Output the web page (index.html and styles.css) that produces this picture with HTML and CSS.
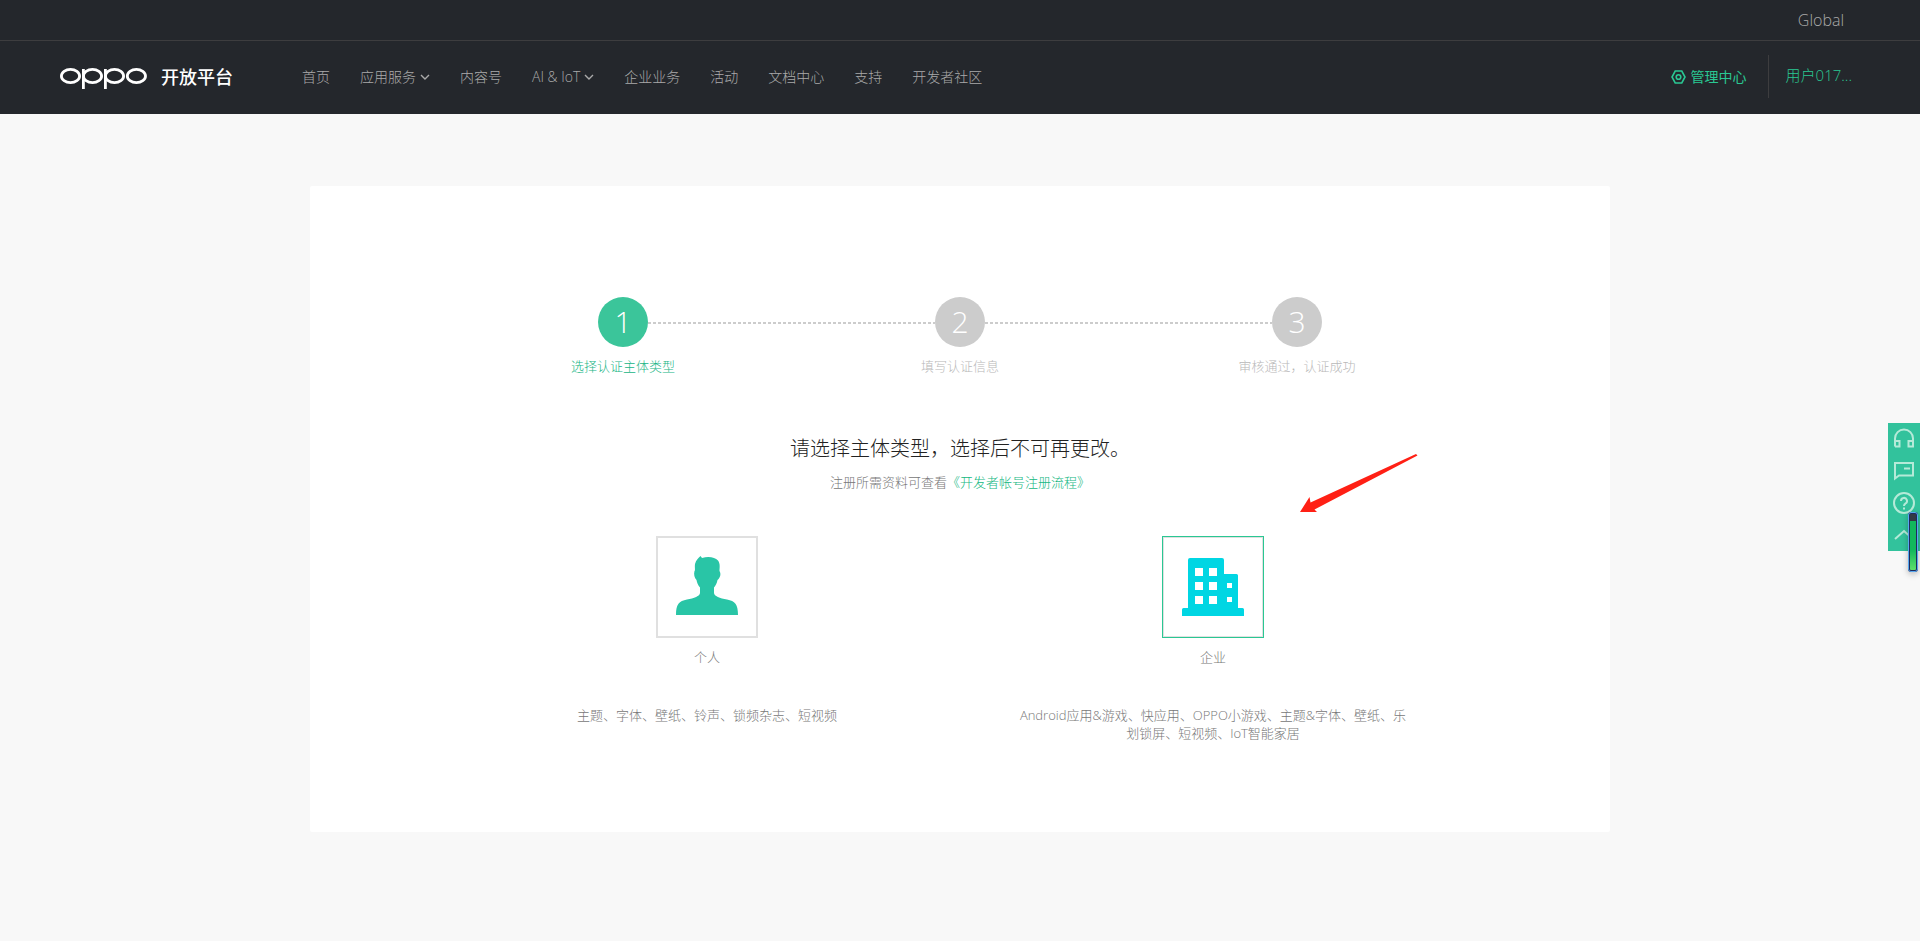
FILE: index.html
```html
<!DOCTYPE html>
<html lang="zh-CN">
<head>
<meta charset="utf-8">
<meta name="viewport" content="width=device-width, initial-scale=1">
<title>OPPO 开放平台</title>
<link rel="stylesheet" href="styles.css">
</head>
<body>
<header class="header">
  <div class="topbar"><a class="global" href="#">Global</a></div>
  <div class="navbar">
    <a class="brand" href="#">
      <svg class="brand-logo" viewBox="0 0 87 21" role="img" aria-label="OPPO">
        <g fill="none" stroke="#fff" stroke-width="2.8">
          <ellipse cx="10.5" cy="8" rx="9.1" ry="6.600"/>
          <ellipse cx="32.5" cy="8" rx="9.1" ry="6.600"/>
          <ellipse cx="54.5" cy="8" rx="9.1" ry="6.600"/>
          <ellipse cx="76.4" cy="8" rx="9.1" ry="6.600"/>
          <path d="M23.400 1v20M45.400 1v20"/>
        </g>
      </svg>
      <span class="brand-name">开放平台</span>
    </a>
    <nav class="menu">
      <a href="#">首页</a>
      <a href="#">应用服务<svg class="chevron" viewBox="0 0 10 6"><path d="M1 1l4 4 4-4"/></svg></a>
      <a href="#">内容号</a>
      <a href="#">AI &amp; IoT<svg class="chevron" viewBox="0 0 10 6"><path d="M1 1l4 4 4-4"/></svg></a>
      <a href="#">企业业务</a>
      <a href="#">活动</a>
      <a href="#">文档中心</a>
      <a href="#">支持</a>
      <a href="#">开发者社区</a>
    </nav>
    <div class="account">
      <a class="console" href="#">
        <svg class="console-icon" viewBox="0 0 15 14"><path d="M4.200 1h6.600L14 7l-3.200 6H4.200L1 7z"/><circle cx="7.500" cy="7" r="2.300"/></svg>
        管理中心
      </a>
      <a class="user" href="#">用户017...</a>
    </div>
  </div>
</header>

<main class="card">
  <ol class="steps">
    <li class="step active"><span class="num">1</span><span class="step-label">选择认证主体类型</span></li>
    <li class="step"><span class="num">2</span><span class="step-label">填写认证信息</span></li>
    <li class="step"><span class="num">3</span><span class="step-label">审核通过，认证成功</span></li>
  </ol>
  <h1 class="title">请选择主体类型，选择后不可再更改。</h1>
  <p class="hint">注册所需资料可查看<a href="#">《开发者帐号注册流程》</a></p>
  <div class="options">
    <section class="option">
      <button class="tile" type="button" aria-labelledby="personal">
        <svg viewBox="0 0 62 60"><path fill="#29c5a6" d="M0 59C0 48 3 45 11 43.500C18 42.500 24 40 24 37V31.500C21.500 29 21 26 20.500 24C18.500 22 17.500 18 18.500 15C19.500 15 18.500 11 19 8C20 4 22.500 2 24.500 0L26 2C33 0 39 1.500 42 4.500C44.500 8 43.500 12 43.500 15C45.500 18 44 22 41.500 24C41 27 39.500 30 38 31.500V37C38 40 44 42.500 51 43.500C59 45 62 48 62 59z"/></svg>
      </button>
      <h2 class="option-name" id="personal">个人</h2>
      <p class="option-text">主题、字体、壁纸、铃声、锁频杂志、短视频</p>
    </section>
    <section class="option">
      <button class="tile selected" type="button" aria-labelledby="company">
        <svg viewBox="0 0 62 60"><path fill="#00d6e3" fill-rule="evenodd" d="M0 60V53.500Q0 52 1.500 52H6V4Q6 2 8 2H40Q42 2 42 4V18H54.500Q56 18 56 19.500V52H60.500Q62 52 62 53.500V60zM13 12v8h8v-8zM27 12v8h8v-8zM13 26v8h8v-8zM27 26v8h8v-8zM13 40v8h8v-8zM27 40v8h8v-8zM45 27v5h5v-5zM45 41v5h5v-5z"/></svg>
      </button>
      <h2 class="option-name" id="company">企业</h2>
      <p class="option-text">Android应用&amp;游戏、快应用、OPPO小游戏、主题&amp;字体、壁纸、乐划锁屏、短视频、IoT智能家居</p>
    </section>
    <svg class="arrow" viewBox="0 0 118 59"><path fill="#ff2015" d="M0 58L9.500 43 10.500 48.500 116 0 117.500 1.500 14.500 55.500 17 58z"/></svg>
  </div>
</main>

<aside class="sidebar">
  <button type="button" aria-label="客服"><svg viewBox="0 0 22 22"><path d="M2 18.500V10.500a9 9 0 0 1 18 0v8h-4.500V13H20M2 13h4.500v5.500H2"/></svg></button>
  <button type="button" aria-label="反馈"><svg viewBox="0 0 22 22"><path d="M2 3h18v12.500H6l-4 3zM11 8.500h6"/></svg></button>
  <button type="button" aria-label="帮助"><svg viewBox="0 0 22 22"><circle cx="11" cy="11" r="10"/><path d="M8 9a3 3 0 1 1 4.500 2.500Q11 12.300 11 14M11 15.500v2"/></svg></button>
  <button type="button" aria-label="返回顶部"><svg viewBox="0 0 22 22"><path d="M2 15l9-8 9 8"/></svg></button>
  <span class="meter"></span>
</aside>
</body>
</html>
```

FILE: styles.css
```css
* { box-sizing: border-box; }

body {
  margin: 0;
  background: #f8f8f8;
  color: #777;
  font-family: "Open Sans", "Noto Sans CJK SC", sans-serif;
  font-size: 13px;
  font-weight: 300;
}

a { color: inherit; text-decoration: none; }
button { padding: 0; border: 0; background: none; cursor: pointer; }
h1, h2, p, ol { margin: 0; padding: 0; font-weight: inherit; }

.header { background: #24272c; color: #aaa; }

.topbar {
  display: flex;
  justify-content: flex-end;
  align-items: center;
  height: 41px;
  padding-right: 76px;
  border-bottom: 1px solid #3d3d3f;
  font-size: 16px;
  line-height: 20px;
}

.navbar {
  display: flex;
  align-items: center;
  height: 73px;
  padding: 0 68px 2px 60px;
  font-size: 14px;
  line-height: 20px;
}

.brand { display: flex; align-items: center; gap: 14px; color: #fff; }
.brand-logo { width: 87px; height: 21px; margin-top: 4px; }
.brand-name { font-size: 18px; font-weight: 500; line-height: 24px; }

.menu { display: flex; gap: 30px; margin-left: 69px; }
.menu a { display: flex; align-items: center; gap: 4px; white-space: nowrap; }
.chevron { width: 10px; height: 6px; fill: none; stroke: #aaa; stroke-width: 1.4; }

.account { display: flex; align-items: center; margin-left: auto; color: #2ac793; }
.console { display: flex; align-items: center; gap: 5px; padding-right: 21px; font-weight: 400; }
.console-icon { width: 15px; height: 14px; fill: none; stroke: currentColor; stroke-width: 1.6; }
.user {
  height: 43px;
  padding-left: 17px;
  border-left: 1px solid #3d3d3f;
  font-size: 15px;
  line-height: 40px;
}

.card {
  max-width: 1300px;
  margin: 72px auto 0;
  padding: 111px 144px 90px;
  border-radius: 2px;
  background: #fff;
}

.steps { display: flex; justify-content: center; list-style: none; }
.step {
  position: relative;
  display: flex;
  flex-direction: column;
  align-items: center;
  flex: 0 1 337px;
  gap: 9px;
  color: #b8b8b8;
}
.step + .step::before {
  content: "";
  position: absolute;
  top: 25px;
  left: calc(-50% + 25px);
  width: calc(100% - 50px);
  height: 2px;
  background: repeating-linear-gradient(90deg, #ccc 0 3px, transparent 3px 5px);
}
.num {
  width: 50px;
  height: 50px;
  border-radius: 50%;
  background: #ccc;
  color: #fff;
  font-size: 30px;
  line-height: 50px;
  text-align: center;
}
.step-label { line-height: 20px; }
.active { color: #20b585; }
.active .num { background: #3bc59a; }

.title {
  margin-top: 58px;
  color: #222;
  font-size: 20px;
  line-height: 30px;
  text-align: center;
}
.hint { margin-top: 8px; line-height: 20px; text-align: center; }
.hint a { color: #14b882; }

.options { position: relative; display: flex; margin-top: 44px; }
.option { display: flex; flex: 1; flex-direction: column; align-items: center; }
.tile {
  display: flex;
  justify-content: center;
  align-items: center;
  width: 102px;
  height: 102px;
  padding-bottom: 3px;
  border: 2px solid #e0e0e0;
}
.tile svg { width: 62px; height: 60px; }
.tile.selected { border: 1px solid #2ac793; box-shadow: inset 0 0 0 1px #e0e0e0; }
.option-name { margin-top: 9px; font-size: 13px; line-height: 20px; }
.option-text { max-width: 396px; margin-top: 39px; line-height: 18px; text-align: center; }

.arrow { position: absolute; top: -82px; right: 48px; width: 118px; height: 59px; }

.sidebar {
  position: fixed;
  top: 45%;
  right: 0;
  display: grid;
  width: 32px;
  background: #32c29c;
}
.sidebar button { display: flex; justify-content: center; align-items: center; height: 32px; }
.sidebar svg { width: 22px; height: 22px; fill: none; stroke: #b5ead8; stroke-width: 2; }
.meter {
  position: absolute;
  top: 89px;
  right: 2px;
  width: 10px;
  height: 60px;
  border: 2px solid #202a5c;
  border-radius: 3px;
  outline: 1px solid #58a8f0;
  outline-offset: -1px;
  background: linear-gradient(#333a44 0 7px, #12b85c 7px 36px, #5ee06a);
  box-shadow: 0 2px 6px #0004;
}
```
